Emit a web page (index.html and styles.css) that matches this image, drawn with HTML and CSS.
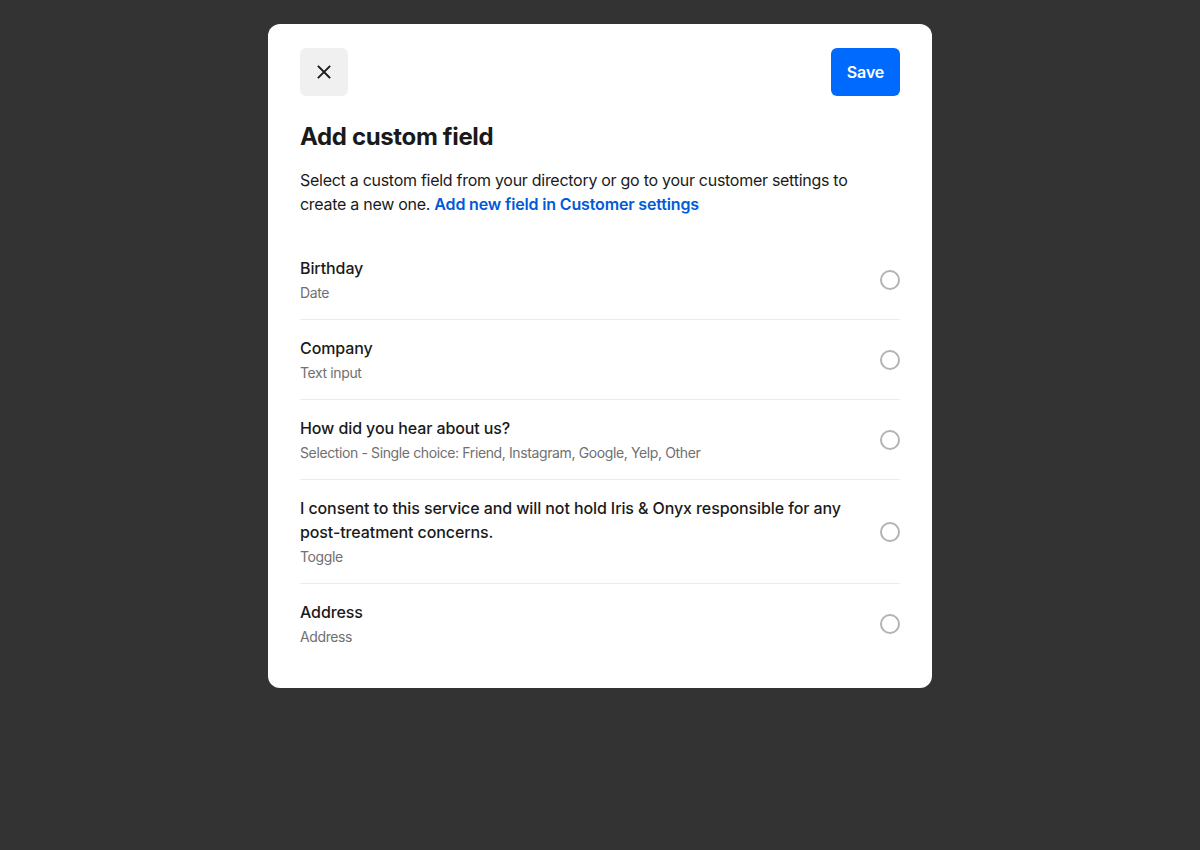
FILE: index.html
```html
<!DOCTYPE html>
<html lang="en">
<head>
<meta charset="utf-8">
<title>Add custom field</title>
<link rel="stylesheet" href="styles.css">
</head>
<body>
<div class="overlay">
  <div class="modal">
    <div class="modal-header">
      <button class="btn-close" aria-label="Close">
        <svg width="16" height="16" viewBox="0 0 16 16"><path d="M2.5 2.5 L13.5 13.5 M13.5 2.5 L2.5 13.5" stroke="#1a1a1a" stroke-width="1.8" stroke-linecap="square" fill="none"/></svg>
      </button>
      <button class="btn-save">Save</button>
    </div>
    <h1 class="title">Add custom field</h1>
    <p class="desc">Select a custom field from your directory or go to your customer settings to create a new one. <a href="#" class="link">Add new field in Customer settings</a></p>
    <ul class="list">
      <li class="row"><div class="row-text"><div class="row-title">Birthday</div><div class="row-sub">Date</div></div><span class="radio"></span></li>
      <li class="row"><div class="row-text"><div class="row-title">Company</div><div class="row-sub">Text input</div></div><span class="radio"></span></li>
      <li class="row"><div class="row-text"><div class="row-title">How did you hear about us?</div><div class="row-sub">Selection - Single choice: Friend, Instagram, Google, Yelp, Other</div></div><span class="radio"></span></li>
      <li class="row"><div class="row-text"><div class="row-title">I consent to this service and will not hold Iris &amp; Onyx responsible for any post-treatment concerns.</div><div class="row-sub">Toggle</div></div><span class="radio"></span></li>
      <li class="row"><div class="row-text"><div class="row-title">Address</div><div class="row-sub">Address</div></div><span class="radio"></span></li>
    </ul>
  </div>
</div>
</body>
</html>
```

FILE: styles.css
```css
* { box-sizing: border-box; }
html, body { margin: 0; padding: 0; }
body {
  background: #333333;
  font-family: Inter, "Noto Sans", sans-serif;
  color: #1a1a1a;
  width: 1200px;
  height: 850px;
}
.overlay {
  display: flex;
  justify-content: center;
  padding-top: 24px;
}
.modal {
  width: 664px;
  background: #ffffff;
  border-radius: 12px;
  padding: 24px 32px 24px;
}
.modal-header {
  display: flex;
  justify-content: space-between;
  align-items: center;
}
.btn-close {
  width: 48px;
  height: 48px;
  border: none;
  border-radius: 6px;
  background: #f0f0f0;
  display: flex;
  align-items: center;
  justify-content: center;
  padding: 0;
}
.btn-save {
  height: 48px;
  width: 69px;
  padding: 0;
  border: none;
  border-radius: 6px;
  background: #006aff;
  color: #ffffff;
  font-family: inherit;
  font-size: 16px;
  font-weight: 600;
  letter-spacing: -0.1px;
}
.title {
  margin: 25px 0 0;
  font-size: 24px;
  line-height: 32px;
  font-weight: 700;
  letter-spacing: -0.35px;
}
.desc {
  margin: 15px 0 0;
  max-width: 565px;
  font-size: 16px;
  line-height: 24px;
  color: #1a1a1a;
  letter-spacing: -0.28px;
}
.link {
  color: #005ad9;
  font-weight: 600;
  text-decoration: none;
  letter-spacing: -0.15px;
}
.list {
  list-style: none;
  margin: 24px 0 0;
  padding: 0;
}
.row {
  display: flex;
  align-items: center;
  gap: 24px;
  padding: 16px 0;
  border-bottom: 1px solid #ebebeb;
}
.row:last-child { border-bottom: none; padding-bottom: 17px; }
.row-text { flex: 1; }
.row-title {
  font-size: 16px;
  line-height: 24px;
  font-weight: 500;
  letter-spacing: -0.1px;
}
.row-sub {
  margin-top: 3px;
  font-size: 14px;
  line-height: 20px;
  color: #707070;
  letter-spacing: -0.38px;
}
.radio {
  flex: none;
  width: 20px;
  height: 20px;
  border: 2px solid #b3b3b3;
  border-radius: 50%;
}
```
